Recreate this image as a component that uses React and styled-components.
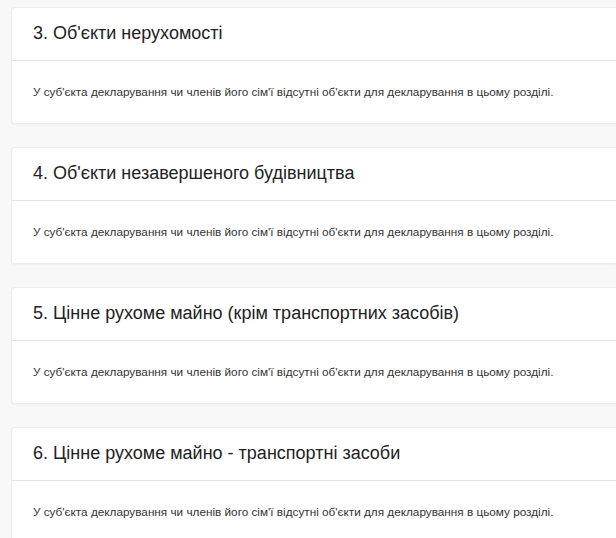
import React from 'react';
import styled, { createGlobalStyle } from 'styled-components';

const GlobalStyle = createGlobalStyle`
  html, body {
    margin: 0;
    padding: 0;
    background: #f8f8f9;
  }
`;

const sections = [
  '3. Об\'єкти нерухомості',
  '4. Об\'єкти незавершеного будівництва',
  '5. Цінне рухоме майно (крім транспортних засобів)',
  '6. Цінне рухоме майно - транспортні засоби',
];

const emptyText =
  'У суб\'єкта декларування чи членів його сім\'ї відсутні об\'єкти для декларування в цьому розділі.';

function App() {
  return (
    <>
      <GlobalStyle />
      <Page>
        {sections.map((title) => (
          <Card key={title}>
            <CardHeader>{title}</CardHeader>
            <CardBody>{emptyText}</CardBody>
          </Card>
        ))}
      </Page>
    </>
  );
}

export default App;

const Page = styled.div`
  display: flex;
  flex-direction: column;
  gap: 23px;
  padding: 7px 0 0 11px;
  width: 616px;
  height: 538px;
  overflow: hidden;
  box-sizing: border-box;
  font-family: "Liberation Sans", Arial, sans-serif;
`;

const Card = styled.div`
  flex: none;
  background: #fff;
  border: 1px solid #ececee;
  border-right: none;
  border-radius: 4px 0 0 4px;
  box-shadow: 0 1px 2px rgba(0, 0, 0, 0.04);
  height: 117px;
  box-sizing: border-box;
  display: flex;
  flex-direction: column;
`;

const CardHeader = styled.div`
  height: 53px;
  box-sizing: border-box;
  border-bottom: 1px solid #e3e3e5;
  padding: 15px 0 0 21px;
  font-size: 18px;
  color: #222;
`;

const CardBody = styled.div`
  padding: 24px 0 0 21px;
  font-size: 11.75px;
  color: #333;
`;
